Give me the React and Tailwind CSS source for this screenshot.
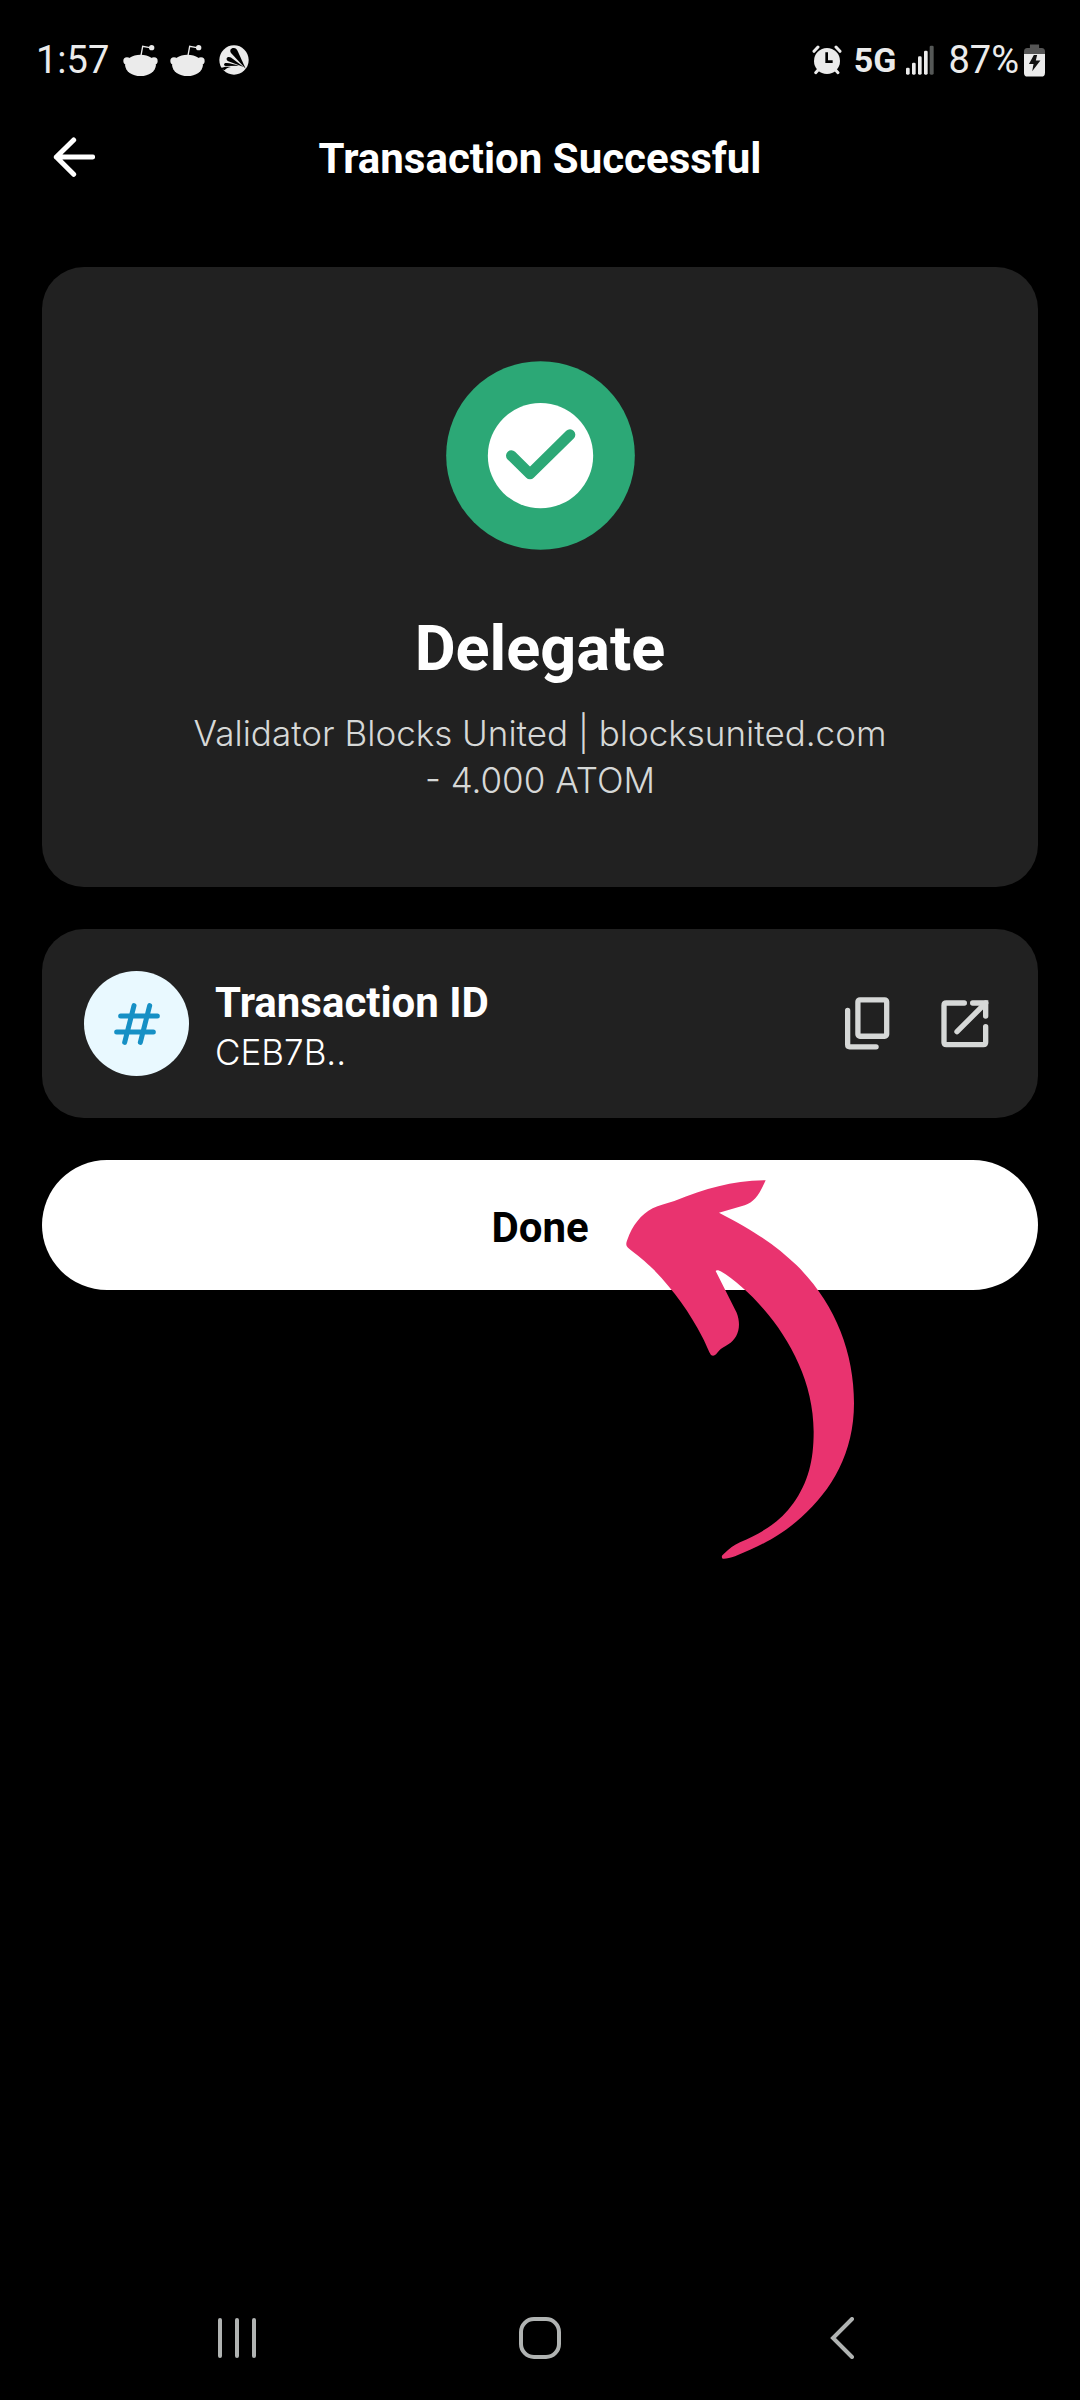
function RedditIcon() {
  return (
    <svg viewBox="0 0 105 93" className="h-[31px] w-[35px]" fill="#ebebeb" aria-hidden="true">
      <path d="M54 32 L59 4 L80 8" fill="none" stroke="#ebebeb" strokeWidth="4" />
      <circle cx="86" cy="8" r="8" />
      <circle cx="12" cy="48" r="11" />
      <circle cx="93" cy="48" r="11" />
      <ellipse cx="52.500" cy="61" rx="46" ry="32" />
    </svg>
  );
}

function WingIcon() {
  return (
    <svg viewBox="0 0 90 90" className="h-[30px] w-[30px]" aria-hidden="true">
      <circle cx="45" cy="45" r="44" fill="#ebebeb" />
      <g fill="#000">
        <path d="M80 71 L36 24 C31 17 35 9 44 9 C51 9 54 14 57 20 Z" />
        <path d="M74 66 L28 49 C21 46 21 37 28 36 C33 35 37 38 42 42 Z" />
        <path d="M60 62 L20 63 C13 62 14 54 21 54 C30 53 45 58 60 62 Z" />
        <path d="M3 70 C14 65 24 64 36 66 C26 67 20 71 17 76 Z" />
      </g>
    </svg>
  );
}

function AlarmIcon() {
  return (
    <svg viewBox="0 0 90 90" className="h-[30px] w-[30px]" fill="none" aria-hidden="true">
      <circle cx="45" cy="48" r="39" fill="#ebebeb" />
      <g stroke="#ebebeb" strokeWidth="9" strokeLinecap="round">
        <path d="M6 19 L18 6 M72 6 L84 19" />
        <path d="M19 74 L11 83 M70 74 L78 83" />
      </g>
      <path d="M44 22 V50 H62" stroke="#000" strokeWidth="8" />
    </svg>
  );
}

function SignalIcon() {
  return (
    <svg viewBox="0 0 84 90" className="h-[30px] w-[28px]" fill="#ebebeb" aria-hidden="true">
      <rect x="0" y="68" width="11" height="21" rx="4" />
      <rect x="18" y="53" width="11" height="36" rx="4" />
      <rect x="36" y="34" width="11" height="55" rx="4" />
      <rect x="54" y="17" width="11" height="72" rx="4" />
      <rect x="71" y="2" width="12" height="87" rx="4" fill="#555857" />
    </svg>
  );
}

function BatteryIcon() {
  return (
    <svg viewBox="0 0 64 98" className="h-[33px] w-[21px]" aria-hidden="true">
      <path d="M18 0 H46 V11 H54 Q64 11 64 22 V40 H0 V22 Q0 11 10 11 H18 Z" fill="#555" />
      <path d="M0 29 H64 V86 Q64 98 53 98 H11 Q0 98 0 86 Z" fill="#ebebeb" />
      <path d="M30 32 H40 L36 49 H50 L25 82 L29 60 H15 Z" fill="#111" />
    </svg>
  );
}

function HintArrow() {
  return (
    <svg
      viewBox="0 0 870 1290"
      className="pointer-events-none absolute -top-[10px] left-[calc(50%+60px)] h-[430px] w-[290px]"
      aria-hidden="true"
    >
      <path
        fill="#e9336f"
        d="M497 91 C477 136 462 156 434 166 L357 188 C462 242 528 286 590 346 C702 456 762 602 762 760 C762 908 696 1020 604 1102 C550 1150 500 1180 405 1219 C390 1224 377 1227 368 1226 C363 1221 366 1216 371 1212 C388 1196 402 1185 420 1177 C488 1147 538 1118 580 1060 C625 996 641 932 641 845 C641 700 572 570 490 476 C450 430 400 386 362 364 C357 361 349 359 347 363 L410 488 C426 530 413 566 385 583 C374 590 363 595 357 602 C349 612 343 621 333 615 C326 604 320 586 308 563 C268 486 224 424 160 358 C138 335 107 312 84 293 C77 286 78 280 82 269 C97 227 123 193 158 175 C176 166 200 161 223 153 C320 116 395 91 497 91 Z"
      />
    </svg>
  );
}

export default function App() {
  return (
    <div className="flex min-h-screen flex-col bg-black font-['Roboto',sans-serif] text-white">
      <div className="flex h-[120px] items-center justify-between pl-[36px] pr-[35px] text-[38px] leading-[48px] text-[#ebebeb]">
        <div className="flex items-center">
          <span>1:57</span>
          <span className="ml-[14px] flex items-center gap-[12px]">
            <RedditIcon />
            <RedditIcon />
          </span>
          <span className="ml-[14px]">
            <WingIcon />
          </span>
        </div>
        <div className="flex items-center">
          <AlarmIcon />
          <span className="ml-[12px] text-[34px] font-bold">5G</span>
          <span className="ml-[10px]">
            <SignalIcon />
          </span>
          <span className="ml-[14px]">87%</span>
          <span className="ml-[5px]">
            <BatteryIcon />
          </span>
        </div>
      </div>

      <header className="grid h-[76px] grid-cols-[1fr_auto_1fr] items-center px-[42px]">
        <button type="button" aria-label="Back" className="w-fit p-[11px]">
          <svg viewBox="0 0 126 126" className="h-[42px] w-[42px]" fill="none" stroke="#fff" strokeWidth="15" strokeLinecap="round" strokeLinejoin="round" aria-hidden="true">
            <path d="M62 9 L10 60 L62 112 M10 60 H119" />
          </svg>
        </button>
        <h1 className="pt-[2px] text-[42px] font-bold leading-[48px]">Transaction Successful</h1>
      </header>

      <main className="mt-[71px] flex flex-col gap-[42px] px-[42px]">
        <section className="flex flex-col items-center rounded-[42px] bg-[#212121] px-[126px] pb-[83px] pt-[94px] text-center">
          <svg viewBox="0 0 567 567" className="h-[189px] w-[189px]" aria-hidden="true">
            <circle cx="283.500" cy="283.500" r="283" fill="#2ca876" />
            <circle cx="283.500" cy="284" r="158" fill="#fff" />
            <path d="M196 284 L252 339 L372 221" fill="none" stroke="#2ca876" strokeWidth="32" strokeLinecap="round" strokeLinejoin="round" />
          </svg>
          <h2 className="mt-[61px] text-[63px] font-bold leading-[76px]">Delegate</h2>
          <p className="mt-[23px] font-['Inter',sans-serif] text-[35px] font-light leading-[47px] text-[#d6d8d7]">
            Validator Blocks United | blocksunited.com
            <br />- 4.000 ATOM
          </p>
        </section>

        <section className="flex items-center rounded-[42px] bg-[#212121] p-[42px]">
          <div className="flex h-[105px] w-[105px] items-center justify-center rounded-full bg-[#e9f9ff]">
            <svg viewBox="0 0 138 126" className="h-[42px] w-[46px]" fill="none" stroke="#1690c5" strokeWidth="15" strokeLinecap="round" aria-hidden="true">
              <path d="M20 39 H130 M8 87 H118 M60 8 L32 118 M107 8 L79 118" />
            </svg>
          </div>
          <div className="ml-[26px] flex-1 pt-[6px]">
            <h3 className="text-[42px] font-bold leading-[52px]">Transaction ID</h3>
            <p className="font-['Inter',sans-serif] text-[35px] font-light leading-[47px]">CEB7B..</p>
          </div>
          <button type="button" aria-label="Copy transaction ID" className="mr-[51px]">
            <svg viewBox="0 0 136 159" className="h-[53px] w-[45px]" fill="none" stroke="#d6d8d7" strokeWidth="16" strokeLinecap="round" strokeLinejoin="round" aria-hidden="true">
              <rect x="39" y="8" width="87" height="110" rx="6" />
              <path d="M8 40 V144 Q8 150 14 150 H94" />
            </svg>
          </button>
          <button type="button" aria-label="Open transaction" className="mr-[7px]">
            <svg viewBox="0 0 144 144" className="h-[48px] w-[48px]" fill="none" stroke="#d6d8d7" strokeWidth="16" strokeLinecap="round" strokeLinejoin="round" aria-hidden="true">
              <path d="M70 9 H16 Q9 9 9 16 V127 Q9 134 16 134 H127 Q134 134 134 127 V80" />
              <path d="M95 9 H134 V48" strokeLinejoin="miter" />
              <path d="M134 9 L48 95" />
            </svg>
          </button>
        </section>

        <div className="relative">
          <button type="button" className="h-[130px] w-full rounded-full bg-white pt-[5px] text-[42px] font-bold leading-[48px] text-black">
            Done
          </button>
          <HintArrow />
        </div>
      </main>

      <nav className="mt-auto flex h-[124px] items-center justify-between px-[216px]" aria-label="System navigation">
        <button type="button" aria-label="Recent apps">
          <svg viewBox="0 0 42 42" className="h-[42px] w-[42px]" fill="none" stroke="#b0b3b2" strokeWidth="4" strokeLinecap="round" aria-hidden="true">
            <path d="M4 3 V39 M21 3 V39 M38 3 V39" />
          </svg>
        </button>
        <button type="button" aria-label="Home">
          <svg viewBox="0 0 42 42" className="h-[42px] w-[42px]" fill="none" stroke="#b0b3b2" strokeWidth="4" aria-hidden="true">
            <rect x="2" y="2" width="38" height="38" rx="13" />
          </svg>
        </button>
        <button type="button" aria-label="Back navigation">
          <svg viewBox="0 0 42 42" className="h-[42px] w-[42px]" fill="none" stroke="#b0b3b2" strokeWidth="4" strokeLinecap="round" strokeLinejoin="miter" aria-hidden="true">
            <path d="M30 2 L11 21 L30 40" />
          </svg>
        </button>
      </nav>
    </div>
  );
}
